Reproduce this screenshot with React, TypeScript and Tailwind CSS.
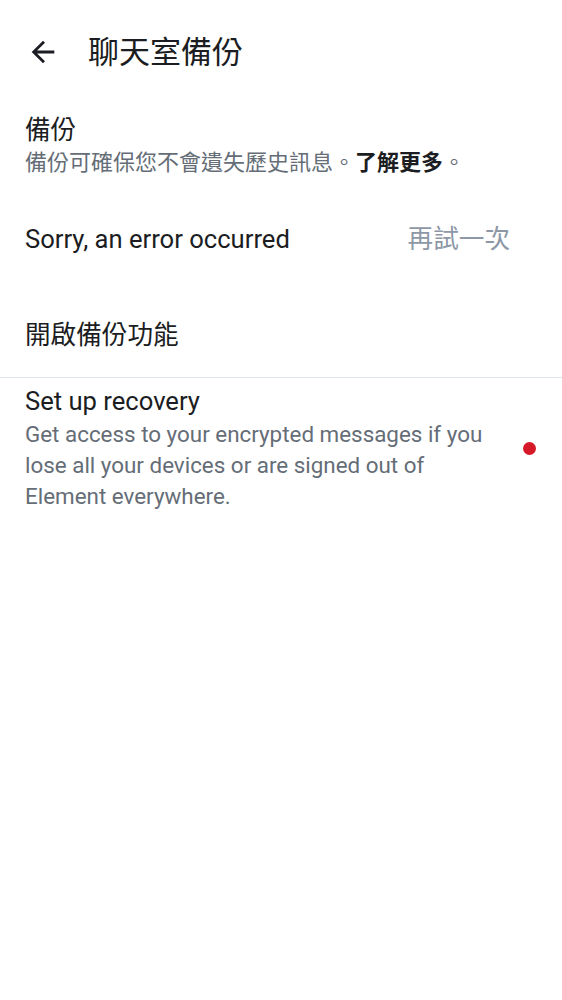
import React from "react";

const font = { fontFamily: 'Roboto, "Noto Sans CJK TC", sans-serif' };

export default function App() {
  return (
    <div className="w-[562px] h-[1000px] bg-white text-[#1b1d22]" style={font}>
      <div className="flex items-center h-[104px] pl-[26px]">
        <svg width="34" height="34" viewBox="0 0 24 24" className="text-[#1b1d22]">
          <path d="M20 11H7.83l5.59-5.59L12 4l-8 8 8 8 1.41-1.41L7.83 13H20v-2z" fill="currentColor" />
        </svg>
        <div className="ml-[28px] text-[31px] leading-none">聊天室備份</div>
      </div>
      <div className="px-[25px] pt-[9px]">
        <div className="text-[25.6px] leading-[34px]">備份</div>
        <div className="text-[22px] leading-[32px] text-[#656d77] whitespace-nowrap">
          備份可確保您不會遺失歷史訊息。<span className="font-bold text-[#1b1d22]">了解更多</span>。
        </div>
      </div>
      <div className="flex items-center justify-between pl-[25px] pr-[52px] h-[96px] mt-[12px]">
        <div className="text-[25.6px]">Sorry, an error occurred</div>
        <div className="text-[25.6px] text-[#8d97a5]">再試一次</div>
      </div>
      <div className="flex items-center px-[25px] h-[90px] pt-[6px]">
        <div className="text-[25.6px]">開啟備份功能</div>
      </div>
      <div className="h-px bg-[#e1e6ec]" />
      <div className="flex items-center pl-[25px] pr-[26px] pt-[6px] gap-[20px]">
        <div className="flex-1">
          <div className="text-[25.6px] leading-[35px]">Set up recovery</div>
          <div className="text-[22.4px] leading-[31px] text-[#656d77]">
            Get access to your encrypted messages if you lose all your devices or are signed out of Element everywhere.
          </div>
        </div>
        <div className="w-[13px] h-[13px] rounded-full bg-[#d51928]" />
      </div>
    </div>
  );
}
